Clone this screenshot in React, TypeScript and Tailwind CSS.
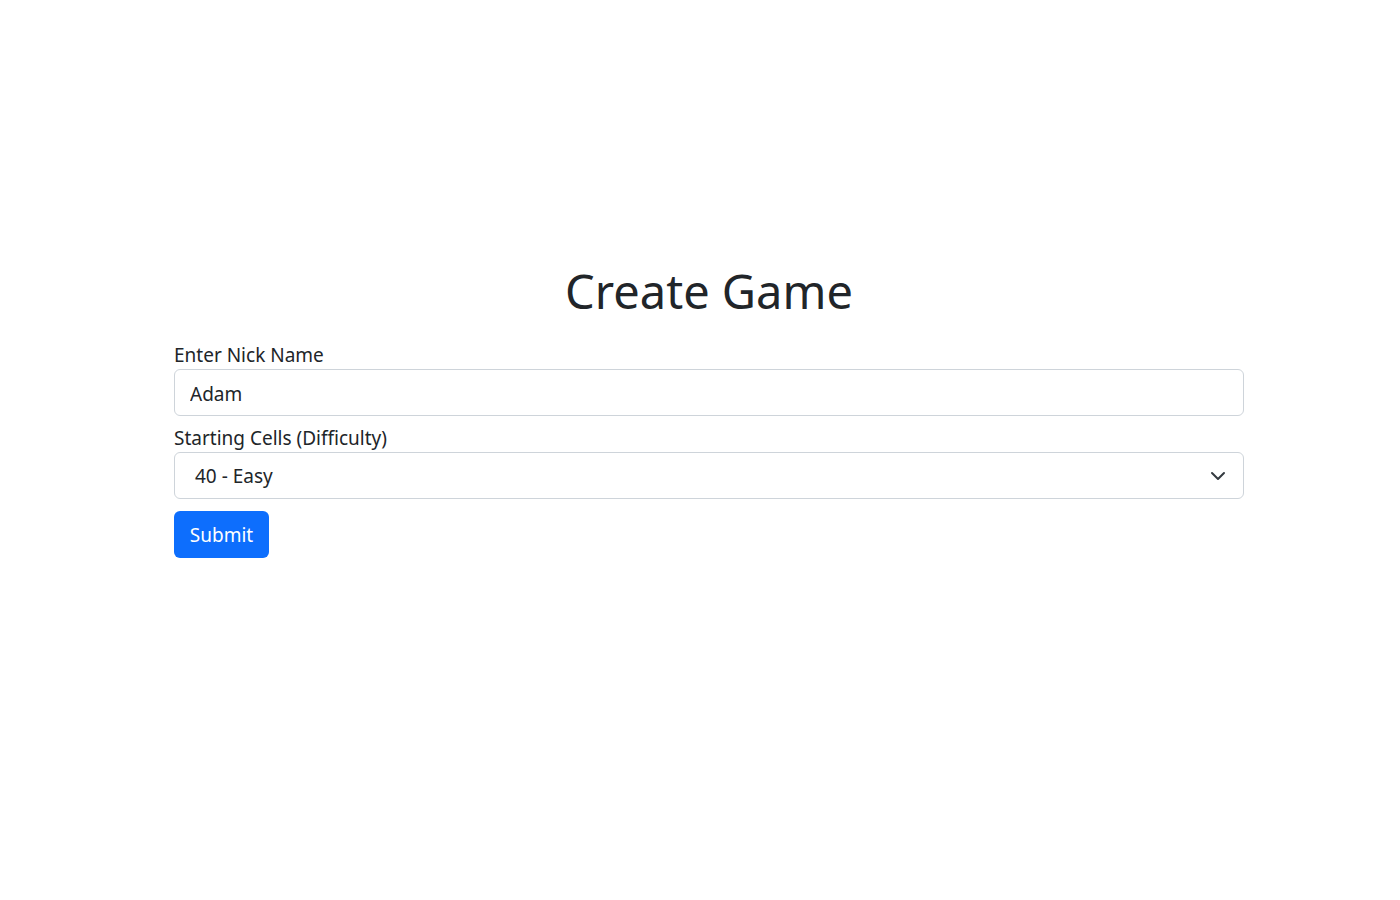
import React from "react";

export default function App() {
  return (
    <div className="min-h-[900px] w-[1400px] bg-white text-[#212529]" style={{ fontFamily: '"Noto Sans", "Open Sans", sans-serif' }}>
      <div className="ml-[174px] w-[1070px] pt-[261px]">
        <h1 className="text-center text-[47px] leading-[60px] font-normal">Create Game</h1>
        <form className="mt-[20px] flex flex-col" onSubmit={(e) => e.preventDefault()}>
          <label className="text-[19px] leading-[28px]">Enter Nick Name</label>
          <input
            defaultValue="Adam"
            className="h-[47px] w-full rounded-[6px] border border-[#ced4da] px-[15px] pt-[2px] text-[19px] text-[#212529] outline-none"
          />
          <label className="mt-[8px] text-[19px] leading-[28px]">Starting Cells (Difficulty)</label>
          <div className="relative">
            <div className="flex h-[47px] w-full items-center rounded-[6px] border border-[#ced4da] pl-[20px] pt-[2px] text-[19px]">
              40 - Easy
            </div>
            <svg className="absolute right-[18px] top-[16px]" width="16" height="16" viewBox="0 0 16 16" fill="none">
              <path d="M2 5l6 6 6-6" stroke="#343a40" strokeWidth="2" strokeLinecap="round" strokeLinejoin="round" />
            </svg>
          </div>
          <div className="mt-[12px]">
            <button type="submit" className="h-[47px] w-[95px] rounded-[6px] bg-[#0d6efd] pt-[2px] text-[19px] text-white">
              Submit
            </button>
          </div>
        </form>
      </div>
    </div>
  );
}
